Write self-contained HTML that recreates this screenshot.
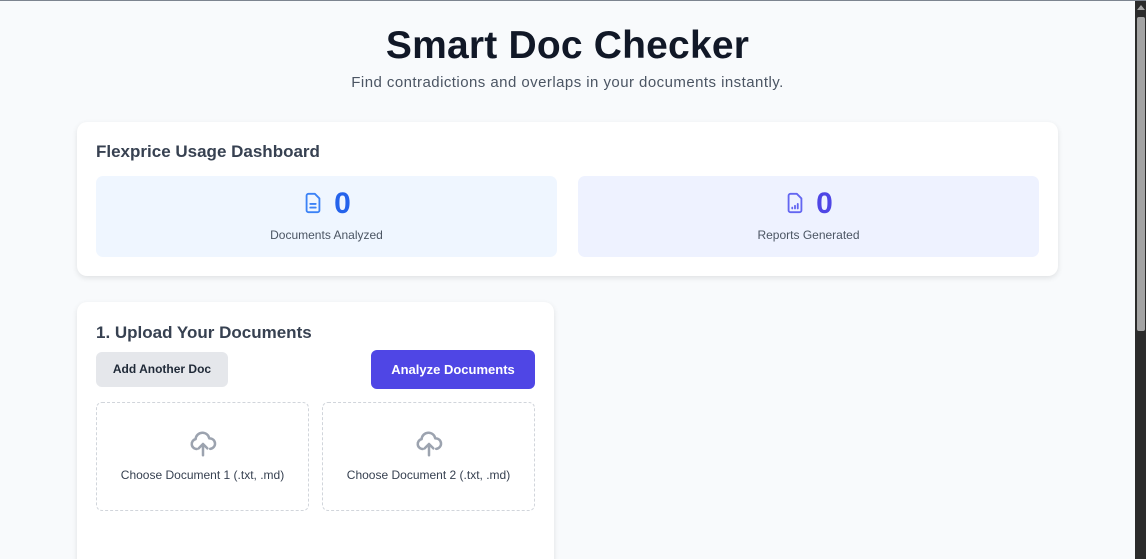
<!DOCTYPE html>
<html><head><style>
*{box-sizing:border-box;margin:0;padding:0}
html,body{width:1146px;height:559px;overflow:hidden}
body{background:#f8fafc;font-family:"Liberation Sans",sans-serif;position:relative;border-top:1px solid #7d8590}
.sb{position:absolute;right:0;top:0;width:11px;height:559px;background:#2b2b2b}
.sb .th{position:absolute;left:2px;top:16px;width:8px;height:314px;background:#a3a3a3;border-radius:2px}
.sb .ar{position:absolute;left:2px;top:4px;width:0;height:0;border-left:4px solid transparent;border-right:4px solid transparent;border-bottom:5px solid #a3a3a3}
h1{position:absolute;left:0;width:1135px;text-align:center;top:23px;font-size:39px;font-weight:bold;color:#111827;letter-spacing:0.2px}
.sub{position:absolute;left:0;width:1135px;text-align:center;top:73px;font-size:15px;color:#4b5563;letter-spacing:0.45px}
.card{position:absolute;background:#fff;border-radius:10px;box-shadow:0 2px 6px rgba(0,0,0,0.1)}
.h2{position:absolute;font-size:17px;font-weight:bold;color:#374151}
.stat{position:absolute;top:54px;height:81px;width:461px;border-radius:7px;text-align:center}
.num{position:absolute;top:11px;left:0;width:100%;font-size:30px;font-weight:bold}
.lbl{position:absolute;top:52px;left:0;width:100%;font-size:12px;color:#4b5563}
.btn{position:absolute;border-radius:6px;font-weight:bold;text-align:center}
.dz{position:absolute;top:100px;height:109px;border:1.5px dashed #d1d5db;border-radius:6px;text-align:center}
.dz svg{position:absolute;left:50%;margin-left:-15px;top:26px}
.dz span{position:absolute;top:65px;left:0;width:100%;font-size:12px;color:#374151}
</style></head><body>
<h1>Smart Doc Checker</h1>
<div class="sub">Find contradictions and overlaps in your documents instantly.</div>
<div class="card" style="left:77px;top:121px;width:981px;height:154px">
 <div class="h2" style="left:19px;top:20px">Flexprice Usage Dashboard</div>
 <div class="stat" style="left:19px;background:#eff6ff">
  <div class="num" style="color:#2563eb"><svg width="22" height="24" viewBox="0 0 24 24" fill="none" stroke="#3b82f6" stroke-width="2" stroke-linecap="round" stroke-linejoin="round" style="vertical-align:-2px;margin-right:10px"><path d="M14 2H7a2 2 0 0 0-2 2v16a2 2 0 0 0 2 2h10a2 2 0 0 0 2-2V7z"/><path d="M9 13h6M9 17h6"/></svg>0</div>
  <div class="lbl">Documents Analyzed</div>
 </div>
 <div class="stat" style="left:501px;background:#eef2ff">
  <div class="num" style="color:#4f46e5"><svg width="22" height="24" viewBox="0 0 24 24" fill="none" stroke="#6366f1" stroke-width="2" stroke-linecap="round" stroke-linejoin="round" style="vertical-align:-2px;margin-right:10px"><path d="M14 2H7a2 2 0 0 0-2 2v16a2 2 0 0 0 2 2h10a2 2 0 0 0 2-2V7z"/><path d="M9 18v-1M12 18v-3M15 18v-5"/></svg>0</div>
  <div class="lbl">Reports Generated</div>
 </div>
</div>
<div class="card" style="left:77px;top:301px;width:477px;height:270px">
 <div class="h2" style="left:19px;top:21px">1. Upload Your Documents</div>
 <div class="btn" style="left:19px;top:50px;width:132px;height:35px;line-height:35px;background:#e5e7eb;color:#1f2937;font-size:12px">Add Another Doc</div>
 <div class="btn" style="left:294px;top:48px;width:164px;height:39px;line-height:39px;background:#4f46e5;color:#fff;font-size:13px">Analyze Documents</div>
 <div class="dz" style="left:19px;width:213px">
  <svg width="30" height="30" viewBox="0 0 24 24" fill="none" stroke="#9ca3af" stroke-width="2" stroke-linecap="round" stroke-linejoin="round"><path d="M7 16a4 4 0 0 1-.9-7.9A5.5 5.5 0 0 1 17 7.5a4.2 4.2 0 0 1 .8 8.4"/><path d="M12 21v-9M8.5 15.5 12 12l3.5 3.5"/></svg>
  <span>Choose Document 1 (.txt, .md)</span></div>
 <div class="dz" style="left:245px;width:213px">
  <svg width="30" height="30" viewBox="0 0 24 24" fill="none" stroke="#9ca3af" stroke-width="2" stroke-linecap="round" stroke-linejoin="round"><path d="M7 16a4 4 0 0 1-.9-7.9A5.5 5.5 0 0 1 17 7.5a4.2 4.2 0 0 1 .8 8.4"/><path d="M12 21v-9M8.5 15.5 12 12l3.5 3.5"/></svg>
  <span>Choose Document 2 (.txt, .md)</span></div>
</div>
<div class="sb"><div class="ar"></div><div class="th"></div></div>
</body></html>
